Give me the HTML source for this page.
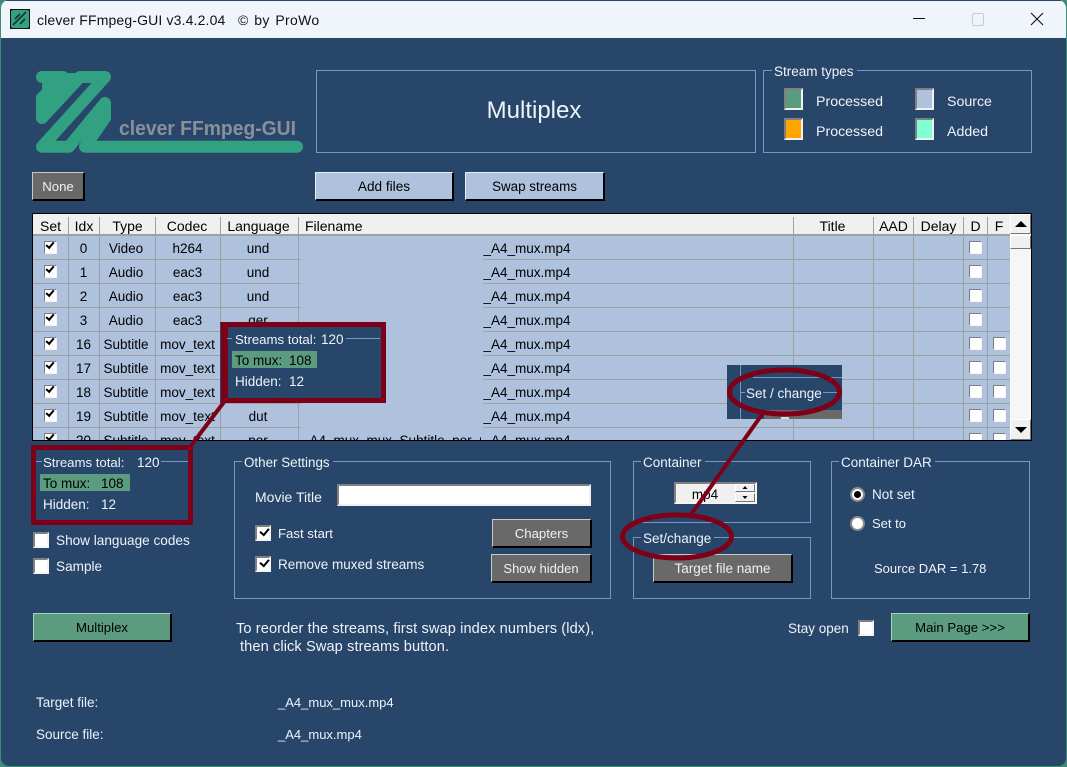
<!DOCTYPE html>
<html><head><meta charset="utf-8"><title>clever FFmpeg-GUI</title>
<style>
html,body{margin:0;padding:0;width:1067px;height:767px;overflow:hidden;background:#3f8a78}
body{position:relative;font:13.5px/16px "Liberation Sans",Arial,sans-serif;color:#eef3f8}
div,span{position:absolute;box-sizing:border-box}
#w{left:1px;top:0;width:1065px;height:766px;background:#27466a;border-radius:8px;overflow:hidden}
#tb{left:0;top:1px;width:1065px;height:37px;background:#eff5fa}
.t{white-space:nowrap;height:16px;margin-top:2px}
.k{color:#000}
.g{border:1px solid #7499c4}
.lg{background:#27466a;padding:0 3px 0 2px;white-space:nowrap;height:16px;top:-7px;line-height:16px}
.b{text-align:center;border-style:solid;border-width:1px 2px 2px 1px;border-color:#c8c8c8 #000 #000 #c8c8c8;line-height:27px;white-space:nowrap;font-size:13.2px}
.gray{background:#696969;color:#f0f0f0}
.blue{background:#aec2dd;color:#000;border-color:#e8eef5 #000 #000 #e8eef5}
.green{background:#5b9c80;color:#000;border-color:#a5d0bb #000 #000 #a5d0bb}
.cb{width:16px;height:16px;background:#fff;border:2px solid;border-color:#808080 #f4f4f4 #f4f4f4 #808080}
.sm{width:13px;height:13px;border-width:1.5px}
.ck::after{content:"";position:absolute;left:2.5px;top:1px;width:7px;height:4px;border-left:2.5px solid #000;border-bottom:2.5px solid #000;transform:rotate(-50deg)}
.sm.ck::after{left:1px;top:0;width:6px;height:3px}
.sw{width:19px;height:22px;border:2px solid;border-color:#808080 #f0f0f0 #f0f0f0 #808080}
#tbl{left:31px;top:213px;width:1000px;height:228px;background:#aec2dd;border:1px solid #000;overflow:hidden;color:#000}
#hd{left:0;top:0;width:977px;height:22px;background:#f0f0f0;border-bottom:2px solid #a0a0a0;line-height:24px;font-size:14px}
#hd span{top:0;text-align:center;white-space:nowrap}
.v{top:0;width:1px;height:228px;background:#a0a0a0}
.r{left:0;width:977px;height:24px;line-height:24px}
.r::before{content:"";position:absolute;left:0;bottom:0;width:268px;height:1px;background:#a0a0a0}
.r::after{content:"";position:absolute;left:450px;bottom:0;width:527px;height:1px;background:#a0a0a0}
.r span{top:1px;text-align:center;white-space:nowrap}
.a{left:35px;width:31px}.c{left:65px;width:56px}.d{left:122px;width:65px}.e{left:186px;width:78px}.f{left:450px;width:88px}
.s1{left:11px;top:5px}.s2{left:936px;top:5px}.s3{left:960px;top:5px}
#sb{left:977px;top:0;width:21px;height:226px;background:#f6f6f6}
.sbb{left:0;width:21px;height:20px;background:#f0f0f0;border:1px solid;border-color:#fff #777 #777 #fff}
.red{border:5px solid #7e0018}
.radio{width:15px;height:15px;border-radius:50%;background:#fff;border:2px solid #8a8a8a}
</style></head>
<body>
<div id="w">
<div id="tb">
<svg style="position:absolute;left:9px;top:8px" width="20" height="20" viewBox="0 0 20 20"><rect width="20" height="20" fill="#111"/><rect x="1" y="1" width="18" height="18" rx="2" fill="#32a182"/><path d="M3 16L16 3M5 10L10 5M10 15L15 10" stroke="#14352c" stroke-width="1.6" fill="none"/></svg>
<div class="t" style="left:36px;top:9px;font-size:14px;color:#111;letter-spacing:.15px">clever FFmpeg-GUI v3.4.2.04</div>
<div class="t" style="left:237px;top:9px;font-size:14px;color:#111;letter-spacing:.3px;word-spacing:1.5px">© by ProWo</div>
<svg style="position:absolute;left:900px;top:0" width="165" height="37" viewBox="0 0 165 37"><path d="M12 17.5H24" stroke="#111" stroke-width="1"/><rect x="71.5" y="12.5" width="11" height="12" rx="1.5" fill="none" stroke="#c8ccd0"/><path d="M130 12L142 24M142 12L130 24" stroke="#111" stroke-width="1.1" fill="none"/></svg>
</div>

<svg style="position:absolute;left:-1px;top:0" width="320" height="170" viewBox="0 0 320 170"><path d="M42 73H84V77L42 118Z" fill="#32a182"/><path d="M42 77H63L42 98V118L80 77H105L42 146.700H69L105 103V118L85 146.700H297" fill="none" stroke="#32a182" stroke-width="12" stroke-linejoin="round" stroke-linecap="round"/><text x="119" y="135" font-family="Liberation Sans" font-weight="bold" font-size="20" fill="#8a909b" textLength="177" lengthAdjust="spacingAndGlyphs">clever FFmpeg-GUI</text></svg>

<div class="g" style="left:315px;top:70px;width:440px;height:83px"></div>
<div class="t" style="left:313px;top:95px;width:440px;height:28px;font-size:24px;line-height:28px;text-align:center">Multiplex</div>

<div class="g" style="left:762px;top:70px;width:269px;height:83px"><span class="lg" style="left:8px">Stream types</span></div>
<div class="sw" style="left:783px;top:88px;background:#5b9c80"></div>
<div class="sw" style="left:914px;top:88px;background:#aec2dd"></div>
<div class="sw" style="left:783px;top:118px;background:#ffa500"></div>
<div class="sw" style="left:914px;top:118px;background:#7fffd4"></div>
<div class="t" style="left:815px;top:92px;font-size:14.2px">Processed</div>
<div class="t" style="left:946px;top:92px;font-size:14.2px">Source</div>
<div class="t" style="left:815px;top:122px;font-size:14.2px">Processed</div>
<div class="t" style="left:946px;top:122px;font-size:14.2px">Added</div>

<div class="b gray" style="left:31px;top:172px;width:53px;height:29px">None</div>
<div class="b blue" style="left:314px;top:172px;width:139px;height:29px;font-size:13.6px">Add files</div>
<div class="b blue" style="left:464px;top:172px;width:140px;height:29px;font-size:13.4px">Swap streams</div>

<div id="tbl">
<div class="v" style="left:35px"></div><div class="v" style="left:66px"></div><div class="v" style="left:122px"></div><div class="v" style="left:187px"></div><div class="v" style="left:265px"></div><div class="v" style="left:760px"></div><div class="v" style="left:840px"></div><div class="v" style="left:880px"></div><div class="v" style="left:930px"></div><div class="v" style="left:954px"></div>
<div id="hd"><span style="left:0;width:35px">Set</span><span style="left:36px;width:30px">Idx</span><span style="left:67px;width:55px">Type</span><span style="left:122px;width:64px">Codec</span><span style="left:187px;width:77px">Language</span><span style="left:272px">Filename</span><span style="left:760px;width:79px">Title</span><span style="left:841px;width:39px">AAD</span><span style="left:881px;width:49px">Delay</span><span style="left:931px;width:23px">D</span><span style="left:955px;width:22px">F</span>
<div class="v" style="left:35px;top:3px;height:17px"></div><div class="v" style="left:66px;top:3px;height:17px"></div><div class="v" style="left:122px;top:3px;height:17px"></div><div class="v" style="left:187px;top:3px;height:17px"></div><div class="v" style="left:265px;top:3px;height:17px"></div><div class="v" style="left:760px;top:3px;height:17px"></div><div class="v" style="left:840px;top:3px;height:17px"></div><div class="v" style="left:880px;top:3px;height:17px"></div><div class="v" style="left:930px;top:3px;height:17px"></div><div class="v" style="left:954px;top:3px;height:17px"></div></div>

<div class="r" style="top:22px"><div class="cb sm ck s1"></div><span class="a">0</span><span class="c">Video</span><span class="d">h264</span><span class="e">und</span><span class="f">_A4_mux.mp4</span><div class="cb sm s2"></div></div>
<div class="r" style="top:46px"><div class="cb sm ck s1"></div><span class="a">1</span><span class="c">Audio</span><span class="d">eac3</span><span class="e">und</span><span class="f">_A4_mux.mp4</span><div class="cb sm s2"></div></div>
<div class="r" style="top:70px"><div class="cb sm ck s1"></div><span class="a">2</span><span class="c">Audio</span><span class="d">eac3</span><span class="e">und</span><span class="f">_A4_mux.mp4</span><div class="cb sm s2"></div></div>
<div class="r" style="top:94px"><div class="cb sm ck s1"></div><span class="a">3</span><span class="c">Audio</span><span class="d">eac3</span><span class="e">ger</span><span class="f">_A4_mux.mp4</span><div class="cb sm s2"></div></div>
<div class="r" style="top:118px"><div class="cb sm ck s1"></div><span class="a">16</span><span class="c">Subtitle</span><span class="d">mov_text</span><span class="e">eng</span><span class="f">_A4_mux.mp4</span><div class="cb sm s2"></div><div class="cb sm s3"></div></div>
<div class="r" style="top:142px"><div class="cb sm ck s1"></div><span class="a">17</span><span class="c">Subtitle</span><span class="d">mov_text</span><span class="e">ger</span><span class="f">_A4_mux.mp4</span><div class="cb sm s2"></div><div class="cb sm s3"></div></div>
<div class="r" style="top:166px"><div class="cb sm ck s1"></div><span class="a">18</span><span class="c">Subtitle</span><span class="d">mov_text</span><span class="e">fre</span><span class="f">_A4_mux.mp4</span><div class="cb sm s2"></div><div class="cb sm s3"></div></div>
<div class="r" style="top:190px"><div class="cb sm ck s1"></div><span class="a">19</span><span class="c">Subtitle</span><span class="d">mov_text</span><span class="e">dut</span><span class="f">_A4_mux.mp4</span><div class="cb sm s2"></div><div class="cb sm s3"></div></div>
<div class="r" style="top:214px"><div class="cb sm ck s1"></div><span class="a">20</span><span class="c">Subtitle</span><span class="d">mov_text</span><span class="e">por</span><span style="left:269px;width:179px;overflow:hidden;text-align:left">_A4_mux_mux_Subtitle_por_mux_mp4</span><span class="f">_A4_mux.mp4</span><div class="cb sm s2"></div><div class="cb sm s3"></div></div>

<div id="sb">
<div class="sbb" style="top:0"><svg style="position:absolute;left:4px;top:6px" width="12" height="7"><path d="M6 0L12 6H0Z" fill="#000"/></svg></div>
<div class="sbb" style="top:21px;height:14px"></div>
<div class="sbb" style="top:205px;height:21px"><svg style="position:absolute;left:4px;top:7px" width="12" height="7"><path d="M0 0H12L6 6Z" fill="#000"/></svg></div>
</div>
</div>

<div class="g" style="left:233px;top:461px;width:377px;height:138px"><span class="lg" style="left:7px;font-size:13.4px">Other Settings</span></div>
<div class="t" style="left:254px;top:487px;font-size:14px">Movie Title</div>
<div style="left:336px;top:484px;width:254px;height:22px;background:#fff;border:2px solid;border-color:#808080 #f0f0f0 #f0f0f0 #808080"></div>
<div class="cb ck" style="left:254px;top:525px"></div>
<div class="t" style="left:277px;top:524px;font-size:13.2px">Fast start</div>
<div class="cb ck" style="left:254px;top:556px"></div>
<div class="t" style="left:277px;top:555px">Remove muxed streams</div>
<div class="b gray" style="left:491px;top:519px;width:100px;height:29px">Chapters</div>
<div class="b gray" style="left:490px;top:554px;width:101px;height:29px;font-size:13px">Show hidden</div>

<div class="g" style="left:632px;top:461px;width:178px;height:62px"><span class="lg" style="left:7px">Container</span></div>
<div style="left:673px;top:482px;width:83px;height:22px;background:#f0f0f0;border:2px solid;border-color:#808080 #f6f6f6 #f6f6f6 #808080"></div>
<div class="t k" style="left:673px;top:485px;width:62px;text-align:center">mp4</div>
<div style="left:734px;top:484px;width:20px;height:8px;background:#f0f0f0;border:1px solid;border-color:#fff #777 #777 #fff"></div>
<div style="left:734px;top:493px;width:20px;height:9px;background:#f0f0f0;border:1px solid;border-color:#fff #777 #777 #fff"></div>
<svg style="position:absolute;left:741px;top:486px" width="6" height="15"><path d="M3 0L5.500 3H.5ZM.5 10H5.500L3 13Z" fill="#000"/></svg>

<div class="g" style="left:632px;top:537px;width:178px;height:62px"><span class="lg" style="left:7px">Set/change</span></div>
<div class="b gray" style="left:652px;top:554px;width:140px;height:29px;font-size:13.5px">Target file name</div>

<div class="g" style="left:830px;top:461px;width:199px;height:138px"><span class="lg" style="left:7px">Container DAR</span></div>
<div class="radio" style="left:849px;top:487px"></div><div style="left:853px;top:491px;width:7px;height:7px;border-radius:50%;background:#000"></div>
<div class="radio" style="left:849px;top:516px"></div>
<div class="t" style="left:871px;top:485px">Not set</div>
<div class="t" style="left:871px;top:514px;font-size:13px">Set to</div>
<div class="t" style="left:873px;top:559px;font-size:13px">Source DAR = 1.78</div>

<div class="t" style="left:787px;top:619px">Stay open</div>
<div class="cb" style="left:857px;top:620px"></div>
<div class="b green" style="left:890px;top:613px;width:139px;height:29px">Main Page &gt;&gt;&gt;</div>

<div class="t" style="left:42px;top:453px;font-size:13.2px">Streams total:</div><div class="t" style="left:136px;top:453px">120</div>
<div style="left:160px;top:461px;width:28px;height:1px;background:#7499c4"></div>
<div style="left:35px;top:461px;width:6px;height:1px;background:#7499c4"></div>
<div style="left:39px;top:474px;width:90px;height:17px;background:#5b9c80"></div>
<div class="t k" style="left:42px;top:474px">To mux:</div><div class="t k" style="left:100px;top:474px">108</div>
<div class="t" style="left:42px;top:495px">Hidden:</div><div class="t" style="left:100px;top:495px">12</div>
<div class="red" style="left:30px;top:445px;width:162px;height:80px"></div>

<div class="cb" style="left:32px;top:532px"></div>
<div class="t" style="left:55px;top:531px;font-size:13.6px">Show language codes</div>
<div class="cb" style="left:32px;top:558px"></div>
<div class="t" style="left:55px;top:557px;font-size:13.6px">Sample</div>

<div class="b green" style="left:32px;top:613px;width:139px;height:29px">Multiplex</div>

<div class="t" style="left:235px;top:619px;font-size:14.6px;letter-spacing:.1px">To reorder the streams, first swap index numbers (ldx),</div>
<div class="t" style="left:239px;top:637px;font-size:14.6px;letter-spacing:.1px">then click Swap streams button.</div>

<div class="t" style="left:35px;top:693px">Target file:</div>
<div class="t" style="left:277px;top:693px;font-size:13px">_A4_mux_mux.mp4</div>
<div class="t" style="left:35px;top:725px">Source file:</div>
<div class="t" style="left:277px;top:725px;font-size:13px">_A4_mux.mp4</div>

<!-- Set / change overlay -->
<div style="left:726px;top:365px;width:115px;height:54px;background:#27466a;overflow:hidden">
<div style="left:13px;top:0;width:1px;height:54px;background:#7499c4"></div>
<div style="left:26px;top:12px;width:89px;height:1px;background:#7499c4"></div>
<div style="left:14px;top:27px;width:5px;height:1px;background:#7499c4"></div>
<div style="left:95px;top:27px;width:20px;height:1px;background:#7499c4"></div>
<div style="left:37px;top:45px;width:78px;height:9px;background:#696969"></div>
<div style="left:54px;top:52px;width:8px;height:2px;background:#dddddd"></div>
<div class="t" style="left:18px;top:19px;background:#27466a;padding:0 1px">Set / change</div>
</div>

<!-- Stream totals overlay -->
<div style="left:219px;top:322px;width:166px;height:81px;background:#27466a;border-top:1px solid #27466a"></div>
<div class="red" style="left:220px;top:322px;width:165px;height:81px;border-width:5px 5px 5px 7px"></div>
<div style="left:226px;top:338px;width:5px;height:1px;background:#7499c4"></div>
<div style="left:345px;top:338px;width:34px;height:1px;background:#7499c4"></div>
<div class="t" style="left:234px;top:330px;font-size:13.2px">Streams total:</div><div class="t" style="left:320px;top:330px">120</div>
<div style="left:231px;top:351px;width:85px;height:17px;background:#5b9c80"></div>
<div class="t k" style="left:234px;top:351px">To mux:</div><div class="t k" style="left:288px;top:351px">108</div>
<div class="t" style="left:234px;top:372px">Hidden:</div><div class="t" style="left:288px;top:372px">12</div>

<svg style="position:absolute;left:-1px;top:0" width="1067" height="767" viewBox="0 0 1067 767">
<g fill="none" stroke="#7e0018">
<path d="M224 402L190 447" stroke-width="4"/>
<path d="M763 413L690 516" stroke-width="4"/>
<ellipse cx="784.500" cy="392" rx="55" ry="22" stroke-width="5"/>
<ellipse cx="677" cy="536.500" rx="54.500" ry="21.500" stroke-width="5"/>
</g></svg>
</div>
</body></html>
